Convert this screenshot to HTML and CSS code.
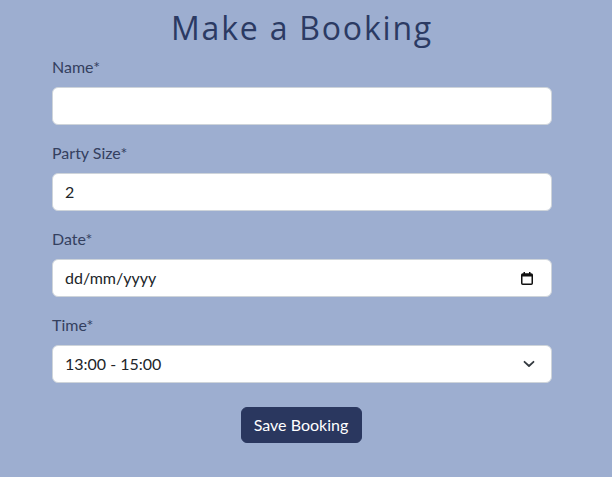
FILE: index.html
```html
<!DOCTYPE html>
<html lang="en">
<head>
<meta charset="utf-8">
<title>Make a Booking</title>
<link rel="stylesheet" href="styles.css">
</head>
<body>
<main class="page">
  <h1 class="title">Make a Booking</h1>
  <form class="form">
    <div class="group">
      <label class="label">Name*</label>
      <div class="field"></div>
    </div>
    <div class="group">
      <label class="label">Party Size*</label>
      <div class="field"><span class="value">2</span></div>
    </div>
    <div class="group">
      <label class="label">Date*</label>
      <div class="field">
        <span class="value">dd/mm/yyyy</span>
        <svg class="icon-cal" width="12" height="13" viewBox="0 0 12 13" aria-hidden="true">
          <rect x="2.5" y="0" width="1.5" height="3" fill="#111"/>
          <rect x="8" y="0" width="1.5" height="3" fill="#111"/>
          <rect x="0.75" y="2" width="10.5" height="10.25" rx="1" fill="none" stroke="#111" stroke-width="1.5"/>
          <rect x="0.75" y="2" width="10.5" height="2.5" fill="#111"/>
        </svg>
      </div>
    </div>
    <div class="group">
      <label class="label">Time*</label>
      <div class="field">
        <span class="value">13:00 - 15:00</span>
        <svg class="icon-chev" width="12" height="8" viewBox="0 0 12 8" aria-hidden="true">
          <path d="M1.5 1.8 L6 6 L10.5 1.8" fill="none" stroke="#343a40" stroke-width="1.8" stroke-linecap="round" stroke-linejoin="round"/>
        </svg>
      </div>
    </div>
    <div class="actions">
      <button type="button" class="btn">Save Booking</button>
    </div>
  </form>
</main>
</body>
</html>
```

FILE: styles.css
```css
* { box-sizing: border-box; }
html, body { margin: 0; padding: 0; }
body {
  background: #9daed0;
  font-family: "Lato", "Open Sans", sans-serif;
  font-size: 16px;
  line-height: 24px;
  color: #212529;
  height: 477px;
  overflow: hidden;
}
.page {
  width: 500px;
  margin-left: 52px;
  padding-top: 9px;
}
.title {
  margin: 0 0 8px;
  text-align: center;
  font-family: "Open Sans", sans-serif;
  font-weight: 400;
  font-size: 32px;
  line-height: 38px;
  letter-spacing: 1.8px;
  color: #2b3a63;
}
.group {
  display: flex;
  flex-direction: column;
  margin-bottom: 16px;
}
.label {
  display: block;
  color: #34405f;
  margin-bottom: 8px;
  font-size: 16px;
  line-height: 24px;
}
.field {
  height: 38px;
  background: #fff;
  border: 1px solid #ced4da;
  border-radius: 6px;
  padding: 6px 12px;
  display: flex;
  align-items: center;
  justify-content: space-between;
  color: #212529;
}
.value { font-size: 16px; line-height: 24px; }
.icon-cal { margin-right: 6px; }
.icon-chev { margin-right: 4px; }
.actions {
  display: flex;
  justify-content: center;
  padding-top: 8px;
}
.btn {
  font-family: "Lato", "Open Sans", sans-serif;
  font-size: 16px;
  line-height: 24px;
  color: #fff;
  background: #2a375f;
  border: 1px solid #2a375f;
  border-radius: 6px;
  padding: 5px 12px;
  height: 36px;
  width: 121px;
  margin-left: -2px;
}
```
